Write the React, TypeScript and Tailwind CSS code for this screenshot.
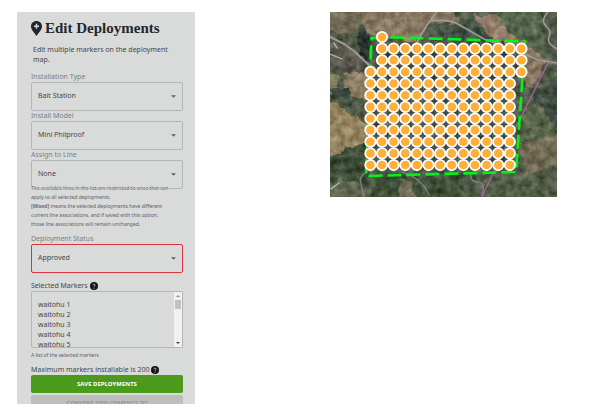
import type { ReactNode } from "react";

const BODY = "font-['Noto_Sans','Open_Sans',sans-serif]";

function HelpIcon() {
  return (
    <svg viewBox="0 0 16 16" className="inline-block h-2 w-2 shrink-0" aria-hidden="true">
      <circle cx="8" cy="8" r="8" fill="#141516" />
      <path d="M5.800 6.300a2.200 2 0 1 1 3.200 1.800c-.8.4-1 .7-1 1.400" fill="none" stroke="#dcdcdc" strokeWidth="1.500" />
      <circle cx="8" cy="12" r="1" fill="#dcdcdc" />
    </svg>
  );
}

type SelectFieldProps = {
  id: string;
  label: string;
  value: string;
  error?: boolean;
  children?: ReactNode;
};

function SelectField({ id, label, value, error, children }: SelectFieldProps) {
  return (
    <div>
      <label htmlFor={id} className="block text-[7px] leading-[10px] text-[#7d7f82]">
        {label}
      </label>
      <div className="relative">
        <select
          id={id}
          defaultValue={value}
          className={`block h-[29px] w-full appearance-none rounded-xs border bg-transparent px-1.5 text-[7px] text-[#454749] ${
            error ? "border-[#d9343f]" : "border-[#b4b5b6]"
          }`}
        >
          <option>{value}</option>
        </select>
        <svg viewBox="0 0 6 3" className="pointer-events-none absolute top-[13px] right-[7px] h-[3px] w-[5px]" aria-hidden="true">
          <path d="M0 0h6L3 3z" fill="#606264" />
        </svg>
      </div>
      {children}
    </div>
  );
}

const markers = Array.from({ length: 12 }, (_, row) =>
  Array.from({ length: 14 }, (_, col) => ({ row, col })).filter(({ col }) => {
    if (row === 0) return col === 1;
    if (row < 3) return col >= 1;
    if (row === 3) return true;
    return col < 13;
  }),
).flat();

function DeploymentMap() {
  return (
    <svg viewBox="0 0 227 185" className="block w-full" role="img" aria-label="Deployment map">
      <defs>
        <filter id="terrain" x="0" y="0" width="100%" height="100%" colorInterpolationFilters="sRGB">
          <feTurbulence type="fractalNoise" baseFrequency="0.13" numOctaves="4" seed="8" result="n" />
          <feColorMatrix in="n" type="matrix" values="1 0 0 0 0  1 0 0 0 0  1 0 0 0 0  0 0 0 0 1" result="g" />
          <feComposite in="SourceGraphic" in2="g" operator="arithmetic" k1="0" k2="1" k3="0.36" k4="-0.14" />
        </filter>
        <filter id="edges" x="-5%" y="-5%" width="110%" height="110%" colorInterpolationFilters="sRGB">
          <feTurbulence type="fractalNoise" baseFrequency="0.09" numOctaves="3" seed="3" result="w" />
          <feDisplacementMap in="SourceGraphic" in2="w" scale="12" xChannelSelector="R" yChannelSelector="G" />
          <feGaussianBlur stdDeviation="0.7" />
        </filter>
      </defs>
      <g filter="url(#terrain)">
        <rect width="227" height="185" fill="#47513f" />
        <g filter="url(#edges)">
          <path d="M-5 -5h35l5 18-15 10-25-6z" fill="#665f4a" />
          <path d="M30 -5h52l22 10-18 24-42-2-12-15z" fill="#80705a" />
          <path d="M88 -5h34l8 15-24 2z" fill="#7c6e58" />
          <path d="M-5 25l22 5 22 24-14 8-30-4z" fill="#514f46" />
          <path d="M14 60l24 2-1 24-24-2z" fill="#82755c" />
          <path d="M-5 62l16 2-2 18-14 3z" fill="#7a7056" />
          <path d="M-5 88l20 10 22 14 0 18-42 22z" fill="#897955" />
          <path d="M0 76l18 0 3 18-18-4z" fill="#303d31" />
          <path d="M26 18l12 2 2 27-10-4z" fill="#222d2a" />
          <path d="M-5 145l40-15 4 40-44 4z" fill="#35452f" />
          <path d="M8 165l22 10-4 15h-30z" fill="#59604a" />
          <path d="M40 165l90-2 8 28h-94z" fill="#37472f" />
          <path d="M68 170l14-2 4 20-14 2z" fill="#68644f" />
          <path d="M104 16l36-4 42 20-64 0z" fill="#37463a" />
          <path d="M142 2l24 4 34 22-8 8-30-9z" fill="#8a7260" />
          <path d="M160 -5h48l8 40-30-8-18-18z" fill="#4c5c43" />
          <path d="M194 38l26 8-10 14-6 18-10-8z" fill="#7f6d58" />
          <path d="M210 76l20-12v50l-34-10z" fill="#354338" />
          <path d="M190 130l40-10v30l-36 15z" fill="#666148" />
          <path d="M192 92l22 2 13 30-30 8z" fill="#515c41" />
          <path d="M150 166l36-4 44-6v34h-76z" fill="#48523d" />
          <path d="M45 35h145l-8 125h-144z" fill="#3c4a43" />
        </g>
      </g>
      <g fill="none" stroke="#a09b94" strokeLinecap="round" strokeLinejoin="round">
        <path d="M0 25l14 7 10 7 17 16" strokeWidth="2" />
        <path d="M108 -2l-7 10-6 8-10 18" strokeWidth="1.600" />
        <path d="M101 9q15-2 25 2l28 16 36 13 18 8 19 3" strokeWidth="1.600" />
        <path d="M218 0q-8 9-2 14t3 11 8 12" strokeWidth="1.600" />
        <path d="M37 160q-9 5-6 12l3 14M72 160q20 6 27 23M141 162q-1 8 7 8t4 14" stroke="#8b8189" strokeWidth="1.200" />
        <path d="M195 130q20 4 32 22M196 116q16-3 24 5" stroke="#77745d" strokeWidth="0.800" />
        <path d="M0 42l12 5M4 31l3 5M1 177l8-6" stroke="#b9bbb0" strokeWidth="1.300" />
      </g>
      <path d="M227 52l-9-1-26 52-18 35-22 47" fill="none" stroke="#b4609d" strokeWidth="1.200" />
      <path
        d="M53 26h-11.500L36 164l150-4L195 29.500L53 25"
        fill="none"
        stroke="#00f514"
        strokeWidth="2.600"
        strokeDasharray="14 5"
      />
      <g fill="#ffaf38" stroke="#fff" strokeWidth="1.800">
        {markers.map(({ row, col }) => (
          <circle key={`${row}-${col}`} cx={40.4 + col * 11.62} cy={25 + row * 11.64} r="5.200" />
        ))}
      </g>
    </svg>
  );
}

export default function App() {
  return (
    <div className={`grid h-screen grid-cols-[17fr_178fr_135fr_227fr_56fr] bg-white pt-3 pb-2 ${BODY}`}>
      <form className="col-start-2 min-h-0 overflow-hidden bg-[#d9dada] pr-3 pl-[14px] text-[#454749]">
        <h1 className="flex items-center gap-[3px] pt-[5px] font-['Liberation_Serif',serif] text-[15px] leading-[22px] font-bold whitespace-nowrap text-[#23272b]">
          <svg viewBox="0 0 22 30" className="h-[15px] w-[11px] shrink-0" aria-hidden="true">
            <path d="M11 0C4.700 0 0 4.700 0 10.700 0 17 4 20 11 30c7-10 11-13 11-19.300C22 4.700 17.300 0 11 0z" fill="#23272b" />
            <path d="M11 5.500v10M6 10.500h10" stroke="#dadbdb" strokeWidth="2.800" />
          </svg>
          Edit Deployments
        </h1>
        <p className="mt-1.5 mb-[7px] pl-0.5 text-[7px] leading-[10px]">Edit multiple markers on the deployment map.</p>

        <SelectField id="installation-type" label="Installation Type" value="Bait Station" />
        <SelectField id="install-model" label="Install Model" value="Mini Philproof" />
        <SelectField id="assign-line" label="Assign to Line" value="None">
          <div className="-mt-[5px] mb-[5px] text-[5px] leading-[9px] text-[#5f6164]">
            <p>
              The available lines in the list are restricted to ones that can
              <br />
              apply to all selected deployments.
            </p>
            <p>
              <b className="font-semibold">[Mixed]</b> means the selected deployments have different
              <br />
              current line associations, and if saved with this option,
              <br />
              those line associations will remain unchanged.
            </p>
          </div>
        </SelectField>
        <SelectField id="status" label="Deployment Status" value="Approved" error />

        <label htmlFor="selected-markers" className="mt-2 flex items-center gap-0.5 text-[7px] leading-[10px]">
          Selected Markers <HelpIcon />
        </label>
        <div className="flex h-[57px] rounded-xs border border-[#b4b5b6]">
          <textarea
            id="selected-markers"
            readOnly
            aria-describedby="markers-help"
            className="min-w-0 flex-1 resize-none overflow-hidden bg-transparent px-1.5 pt-2 text-[7px] leading-[10px]"
            defaultValue={"waitohu 1\nwaitohu 2\nwaitohu 3\nwaitohu 4\nwaitohu 5"}
          />
          <div className="flex w-2 flex-col items-center justify-between bg-[#f1f1f1] py-[3px]" aria-hidden="true">
            <svg viewBox="0 0 4 2" className="h-0.5 w-1">
              <path d="M0 2h4L2 0z" fill="#8c8c8c" />
            </svg>
            <div className="mt-[3px] mb-auto h-[9px] w-1.5 bg-[#c1c1c1]" />
            <svg viewBox="0 0 4 2" className="h-0.5 w-1">
              <path d="M0 0h4L2 2z" fill="#404040" />
            </svg>
          </div>
        </div>
        <p id="markers-help" className="mt-[3px] text-[5px] leading-[9px] text-[#5f6164]">
          A list of the selected markers
        </p>
        <p className="mt-1 flex items-center gap-0.5 text-[7px] leading-[11px] whitespace-nowrap">
          Maximum markers installable is 200 <HelpIcon />
        </p>
        <button type="button" className="block h-[18px] w-full rounded-xs bg-[#4b9a1c] text-[6px] font-bold text-white">
          SAVE DEPLOYMENTS
        </button>
        <button
          type="button"
          disabled
          className="mt-0.5 block w-full rounded-xs bg-[#bdbebe] px-4 py-[3px] text-[6px] leading-[10px] font-medium text-[#8b8c8c]"
        >
          CONVERT DEPLOYMENTS TO
        </button>
      </form>
      <div className="col-start-4">
        <DeploymentMap />
      </div>
    </div>
  );
}
